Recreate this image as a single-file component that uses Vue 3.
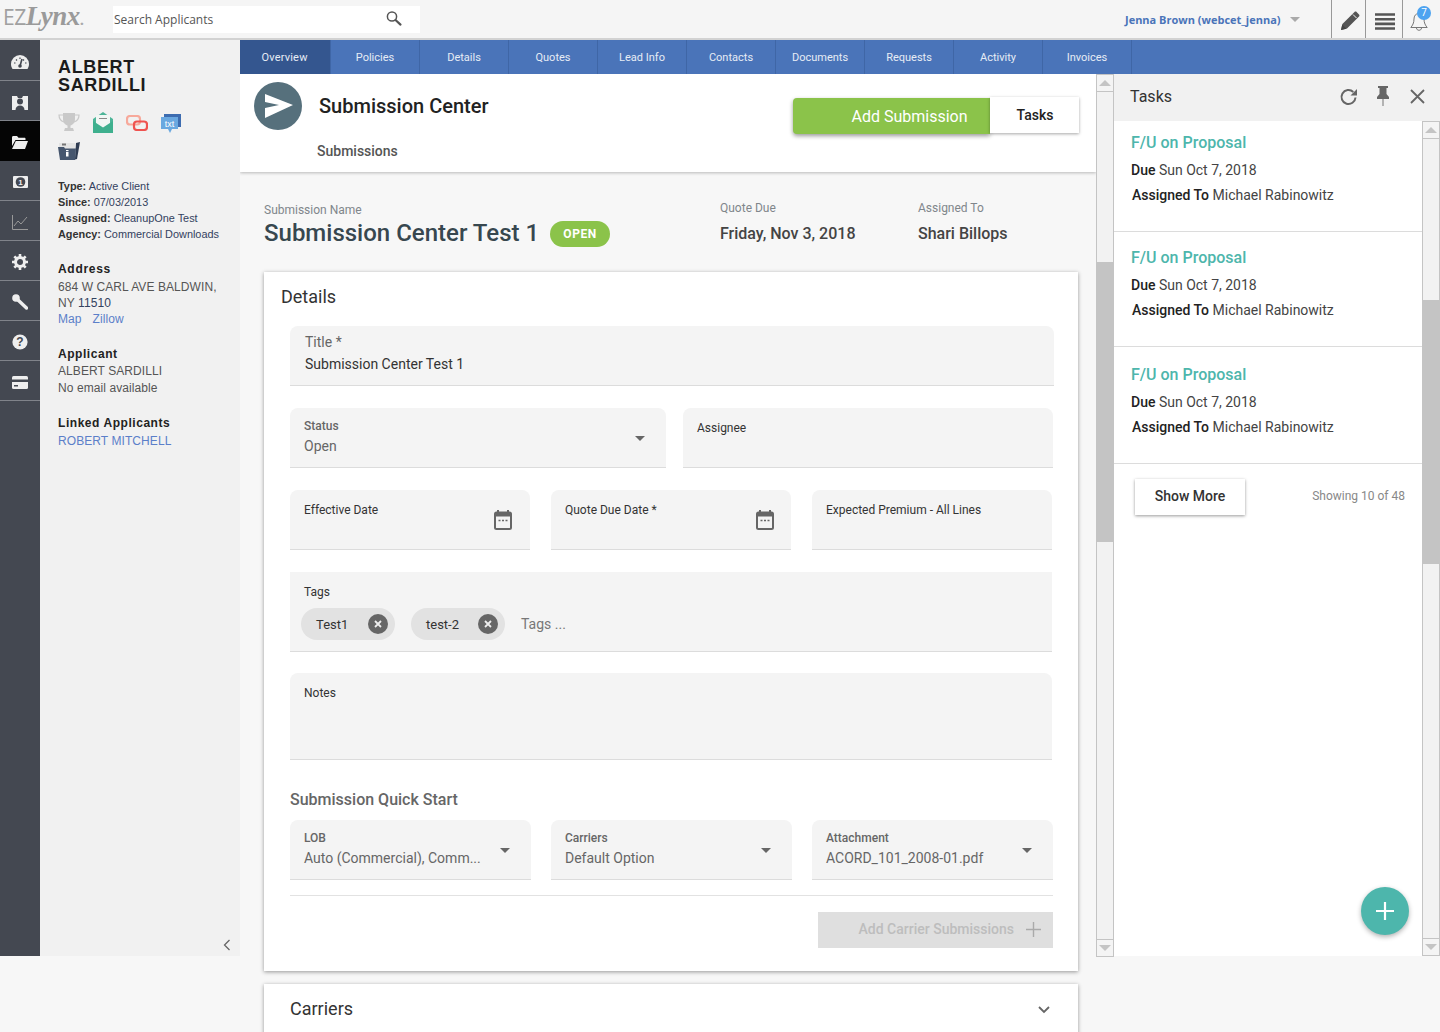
<script setup>
const navItems = ['Overview','Policies','Details','Quotes','Lead Info','Contacts','Documents','Requests','Activity','Invoices']
const tasks = [
  { cls: 't1' }, { cls: 't2' }, { cls: 't3' }
]
const dropdowns = [
  { label: 'LOB', value: 'Auto (Commercial), Comm...', cls: 'w241' },
  { label: 'Carriers', value: 'Default Option', cls: 'w241' },
  { label: 'Attachment', value: 'ACORD_101_2008-01.pdf', cls: 'w241' }
]
</script>

<template>
  <div class="app">
    <header class="top">
      <div class="logo"><span class="ez">EZ</span><span class="lynx">Lynx</span><span class="dot">.</span></div>
      <div class="search">
        <span>Search Applicants</span>
        <svg width="18" height="18" viewBox="0 0 18 18" class="search-ico"><circle cx="7" cy="6.5" r="4.6" fill="none" stroke="#555" stroke-width="1.5"/><path d="M10.5 10l5 4.6" stroke="#555" stroke-width="2.2" stroke-linecap="round"/></svg>
      </div>
      <div class="user">Jenna Brown (webcet_jenna)<i class="user-caret"></i></div>
      <div class="tool t-pen">
        <svg width="22" height="22" viewBox="0 0 22 22"><path d="M2 20l1.400-6L15.500 2c.6-.6 1.500-.6 2.100 0l2.400 2.400c.6.6.6 1.500 0 2.100L8 18.600z" fill="#555"/><path d="M2 20l1.300-5.500 4.200 4.200z" fill="#444"/><path d="M14 4.500l3.500 3.500" stroke="#f5f5f5" stroke-width="1"/></svg>
      </div>
      <div class="tool t-menu">
        <svg width="20" height="17" viewBox="0 0 20 17"><path d="M0 1.500h20M0 6.200h20M0 10.900h20M0 15.500h20" stroke="#555" stroke-width="2.600"/></svg>
      </div>
      <div class="tool t-bell">
        <svg width="18" height="20" viewBox="0 0 18 20"><path d="M9 1.500c-3.500 0-5 2.500-5 5.500 0 4-1.500 6.500-3.200 8.500h16.400C15.500 13.500 14 11 14 7c0-3-1.500-5.500-5-5.500zM6.500 16c0 3 5 3 5 0" fill="none" stroke="#777" stroke-width="1"/></svg>
        <span class="badge">7</span>
      </div>
    </header>

    <div class="body">
      <div class="leftwrap">
        <nav class="rail">
          <div class="rail-i">
            <svg width="18" height="14" viewBox="0 0 18 14"><path d="M9 0a9 9 0 0 0-9 9c0 2 .6 3.500 1.500 5h15c.9-1.500 1.500-3 1.500-5a9 9 0 0 0-9-9z" fill="#eee"/><path d="M9 11l2-7" stroke="#444851" stroke-width="1.600"/><circle cx="9" cy="11" r="1.800" fill="#444851"/><path d="M3 8h1.500M5 4.500l1 1M9 2.500v1.500M14 8h1.500M13 4.500l-1 1" stroke="#444851" stroke-width="1.200"/></svg>
          </div>
          <div class="rail-i">
            <svg width="16" height="15" viewBox="0 0 16 15"><path d="M0 1h5l1 2h4l1-2h5v14H0z" fill="#eee"/><circle cx="8" cy="6.500" r="3" fill="#444851"/><path d="M3.500 15c0-3 2-4.500 4.500-4.500s4.500 1.500 4.500 4.500z" fill="#444851"/></svg>
          </div>
          <div class="rail-i active">
            <svg width="16" height="13" viewBox="0 0 16 13"><path d="M0 1.500C0 .7.500 0 1.300 0H5l1.500 1.700h6c.6 0 1 .4 1 1V4H3.500L0 10z" fill="#eee"/><path d="M3.800 5H16l-3 8H0z" fill="#eee"/></svg>
          </div>
          <div class="rail-i">
            <svg width="15" height="12" viewBox="0 0 15 12"><rect width="15" height="12" rx="1" fill="#eee"/><circle cx="7.500" cy="6" r="4.800" fill="#444851"/><text x="7.500" y="9" text-anchor="middle" class="money">1</text></svg>
          </div>
          <div class="rail-i">
            <svg width="16" height="15" viewBox="0 0 16 15"><path d="M.5 0v14.500H16" fill="none" stroke="#999" stroke-width="1"/><path d="M2 11l4-5 3 3 6-7" fill="none" stroke="#999" stroke-width="1"/></svg>
          </div>
          <div class="rail-i">
            <svg width="16" height="16" viewBox="0 0 16 16"><circle cx="8" cy="8" r="4.500" fill="none" stroke="#eee" stroke-width="3"/><path d="M8 0v3M8 13v3M0 8h3M13 8h3M2.300 2.300l2.200 2.200M11.500 11.500l2.200 2.200M2.300 13.700l2.200-2.200M11.500 4.500l2.200-2.200" stroke="#eee" stroke-width="2.600"/></svg>
          </div>
          <div class="rail-i">
            <svg width="16" height="16" viewBox="0 0 16 16"><circle cx="4" cy="4" r="3.800" fill="#eee"/><path d="M6 6l8.500 8" stroke="#eee" stroke-width="3.400" stroke-linecap="round"/></svg>
          </div>
          <div class="rail-i">
            <svg width="16" height="16" viewBox="0 0 16 16"><circle cx="8" cy="8" r="7.600" fill="#eee"/><text x="8" y="12" text-anchor="middle" class="qmark">?</text></svg>
          </div>
          <div class="rail-i">
            <svg width="16" height="13" viewBox="0 0 16 13"><rect width="16" height="13" rx="1.500" fill="#eee"/><rect y="3.500" width="16" height="2.500" fill="#444851"/><rect x="2" y="9" width="4" height="1.500" fill="#444851"/></svg>
          </div>
        </nav>
        <aside class="side">
          <h1 class="name">ALBERT<br>SARDILLI</h1>
          <div class="side-icons">
            <svg width="22" height="21" viewBox="0 0 22 21"><path d="M5 1h12v6c0 4-2.500 6-4.500 6.500V16H15l1 3H6l1-3h2.500v-2.500C7.500 13 5 11 5 7z" fill="#c9c9c9"/><path d="M5 3H1c0 4 2 6 5 7M17 3h4c0 4-2 6-5 7" fill="none" stroke="#c9c9c9" stroke-width="1.200"/></svg>
            <svg width="20" height="21" viewBox="0 0 20 21"><path d="M0 7l10-7 10 7v14H0z" fill="#4db598"/><path d="M3 3h14v10l-7 4-7-4z" fill="#f1f7f4"/><path d="M6 6.500h8" stroke="#888" stroke-width="1"/><path d="M0 9l10 6.500L20 9v12H0z" fill="#3fb08e"/></svg>
            <svg class="chain" width="22" height="16" viewBox="0 0 22 16"><rect x="1" y="1" width="13" height="8.500" rx="3" fill="none" stroke="#f7a99b" stroke-width="2.200"/><rect x="8" y="6.500" width="13" height="8.500" rx="3" fill="none" stroke="#ef5350" stroke-width="2.200"/></svg>
            <svg class="txtico" width="20" height="20" viewBox="0 0 20 20"><rect x="3" width="17" height="13" fill="#3d6cb0"/><path d="M0 3h17v12H11l-2 4-2-4H0z" fill="#6aa8e0"/><text x="8.500" y="12.500" text-anchor="middle" class="txt">txt</text></svg>
          </div>
          <div class="side-folder">
            <svg width="22" height="18" viewBox="0 0 22 18"><path d="M18 1l4-1-3 17-2 .5z" fill="#2f3c52"/><rect x="1" y="1" width="16" height="6" fill="#e4e4e4"/><rect x="4" y="1.500" width="4" height="2" fill="#777"/><path d="M0 5h6l1 1.500h11L17 18H2z" fill="#46566e"/><rect x="8" y="10" width="2.500" height="4.500" fill="#fff"/><rect x="8" y="8" width="2.500" height="1.200" fill="#fff"/></svg>
          </div>
          <div class="meta">
            <div><b>Type:</b> Active Client</div>
            <div><b>Since:</b> 07/03/2013</div>
            <div><b>Assigned:</b> CleanupOne Test</div>
            <div><b>Agency:</b> Commercial Downloads</div>
          </div>
          <h3 class="sec s-addr">Address</h3>
          <div class="line">684 W CARL AVE BALDWIN,</div>
          <div class="line">NY <span class="dark">11510</span></div>
          <div class="line link"><span class="map">Map</span>Zillow</div>
          <h3 class="sec s-app">Applicant</h3>
          <div class="line l17">ALBERT SARDILLI</div>
          <div class="line l17">No email available</div>
          <h3 class="sec s-link">Linked Applicants</h3>
          <div class="line link">ROBERT MITCHELL</div>
          <svg class="collapse" width="8" height="12" viewBox="0 0 8 12"><path d="M6.500 1L1.500 6l5 5" fill="none" stroke="#666" stroke-width="1.300"/></svg>
        </aside>
      </div>

      <div class="mainwrap">
        <div class="tabs">
          <a v-for="(n, i) in navItems" :key="n" class="tab" :class="{ on: i === 0 }">{{ n }}</a>
        </div>
        <div class="columns">
          <main class="center">
            <section class="head">
              <div class="head-l">
                <div class="circle">
                  <svg width="28" height="24" viewBox="0 0 28 24"><path d="M0 0l28 11-28 13V14l14-3L0 8z" fill="#fff"/></svg>
                </div>
                <h2>Submission Center</h2>
              </div>
              <div class="head-btns">
                <button class="add">Add Submission</button>
                <button class="tasksbtn">Tasks</button>
              </div>
              <div class="subtab">Submissions</div>
            </section>

            <section class="summary">
              <div class="s-main">
                <div class="s-lbl">Submission Name</div>
                <div class="s-title">Submission Center Test 1<span class="pill">OPEN</span></div>
              </div>
              <div class="s-col c1">
                <div class="s-lbl">Quote Due</div>
                <div class="s-val">Friday, Nov 3, 2018</div>
              </div>
              <div class="s-col">
                <div class="s-lbl">Assigned To</div>
                <div class="s-val">Shari Billops</div>
              </div>
            </section>

            <section class="card details">
              <h3 class="card-h">Details</h3>
              <div class="fld title-f">
                <div class="lab-lg">Title *</div>
                <div class="val-dark">Submission Center Test 1</div>
              </div>
              <div class="row r-two">
                <div class="fld f-status">
                  <div class="lab">Status</div>
                  <div class="val">Open</div>
                  <i class="caret"></i>
                </div>
                <div class="fld f-assign"><div class="lab plain">Assignee</div></div>
              </div>
              <div class="row r-three">
                <div class="fld f-date"><div class="lab plain">Effective Date</div>
                  <svg class="cal" width="18" height="20" viewBox="0 0 18 20"><path d="M4 0v3M14 0v3" stroke="#666" stroke-width="2"/><rect x="1" y="2.500" width="16" height="16.500" rx="1.500" fill="none" stroke="#666" stroke-width="2"/><rect x="1" y="2.500" width="16" height="4" fill="#666"/><path d="M4.500 10.500h2M8 10.500h2M11.500 10.500h2" stroke="#666" stroke-width="1.600"/></svg>
                </div>
                <div class="fld f-date"><div class="lab plain">Quote Due Date *</div>
                  <svg class="cal" width="18" height="20" viewBox="0 0 18 20"><path d="M4 0v3M14 0v3" stroke="#666" stroke-width="2"/><rect x="1" y="2.500" width="16" height="16.500" rx="1.500" fill="none" stroke="#666" stroke-width="2"/><rect x="1" y="2.500" width="16" height="4" fill="#666"/><path d="M4.500 10.500h2M8 10.500h2M11.500 10.500h2" stroke="#666" stroke-width="1.600"/></svg>
                </div>
                <div class="fld f-date"><div class="lab plain">Expected Premium - All Lines</div></div>
              </div>
              <div class="fld f-tags">
                <div class="lab plain">Tags</div>
                <div class="chips">
                  <span class="chip">Test1<i class="x"><svg width="8" height="8" viewBox="0 0 8 8"><path d="M1 1l6 6M7 1L1 7" stroke="#eee" stroke-width="1.800"/></svg></i></span>
                  <span class="chip c2">test-2<i class="x"><svg width="8" height="8" viewBox="0 0 8 8"><path d="M1 1l6 6M7 1L1 7" stroke="#eee" stroke-width="1.800"/></svg></i></span>
                  <span class="tagph">Tags ...</span>
                </div>
              </div>
              <div class="fld f-notes"><div class="lab plain">Notes</div></div>
              <h4 class="qs">Submission Quick Start</h4>
              <div class="row r-dd">
                <div v-for="d in dropdowns" :key="d.label" class="fld f-dd">
                  <div class="lab">{{ d.label }}</div>
                  <div class="val">{{ d.value }}</div>
                  <i class="caret"></i>
                </div>
              </div>
              <div class="rule"></div>
              <div class="act">
                <div class="disabled">Add Carrier Submissions
                  <svg width="15" height="15" viewBox="0 0 15 15"><path d="M7.500 0v15M0 7.500h15" stroke="#aaa" stroke-width="1.400"/></svg>
                </div>
              </div>
            </section>

            <section class="card carriers">
              <span>Carriers</span>
              <svg width="12" height="8" viewBox="0 0 12 8"><path d="M1 1l5 5 5-5" fill="none" stroke="#666" stroke-width="1.800"/></svg>
            </section>
          </main>

          <div class="sb sb-outer">
            <div class="sb-btn"><i class="up"></i></div>
            <div class="sb-track"><div class="thumb"></div></div>
            <div class="sb-btn"><i class="down"></i></div>
          </div>

          <aside class="panel">
            <div class="panel-h">
              <span>Tasks</span>
              <svg class="ph1" width="20" height="20" viewBox="0 0 20 20"><path d="M16.500 10.500a7 7 0 1 1-2.200-5.600" fill="none" stroke="#666" stroke-width="2"/><path d="M18 2v6.500h-6.500z" fill="#666"/></svg>
              <svg class="ph2" width="14" height="20" viewBox="0 0 14 20"><path d="M2 0h10v2h-1.500v6L13 11v2H1v-2l2.500-3V2H2z" fill="#666"/><path d="M7 13v7" stroke="#999" stroke-width="1.400"/></svg>
              <svg class="ph3" width="15" height="15" viewBox="0 0 15 15"><path d="M1 1l13 13M14 1L1 14" stroke="#666" stroke-width="1.800"/></svg>
            </div>
            <div class="panel-b">
              <div class="list">
                <div v-for="t in tasks" :key="t.cls" class="task" :class="t.cls">
                  <a class="t-title">F/U on Proposal</a>
                  <div class="t-line first"><b>Due</b> Sun Oct 7, 2018</div>
                  <div class="t-line ind"><b>Assigned To</b> Michael Rabinowitz</div>
                </div>
                <div class="more">
                  <button class="showmore">Show More</button>
                  <span class="showing">Showing 10 of 48</span>
                </div>
                <button class="fab">
                  <svg width="20" height="20" viewBox="0 0 20 20"><path d="M10 1v18M1 10h18" stroke="#fff" stroke-width="2.200"/></svg>
                </button>
              </div>
              <div class="sb sb-inner">
                <div class="sb-btn"><i class="up"></i></div>
                <div class="sb-track"><div class="thumb"></div></div>
                <div class="sb-btn"><i class="down"></i></div>
              </div>
            </div>
          </aside>
        </div>
      </div>
    </div>
  </div>
</template>

<style>
html, body { margin: 0; background: #f7f7f7; }
</style>

<style scoped>
* { box-sizing: border-box; }
.app { width: 1440px; height: 1032px; overflow: hidden; background: #f7f7f7; font-family: Roboto, sans-serif; color: #333; }

.top { height: 40px; display: flex; align-items: stretch; background: #f5f5f5; border-bottom: 2px solid #d2d2d2; }
.logo { width: 113px; padding-left: 3px; line-height: 40px; color: #999; white-space: nowrap; }
.ez { font: 21px "Open Sans", sans-serif; letter-spacing: -.5px; color: #a0a0a0; }
.lynx { font: italic 700 27px "Liberation Serif", serif; color: #9a9a9a; letter-spacing: -.5px; }
.dot { font: 700 15px "Open Sans", sans-serif; color: #aaa; }
.search { width: 307px; height: 27px; margin-top: 6px; background: #fff; padding-left: 1px; display: flex; align-items: center; justify-content: space-between; font: 12px "Open Sans", sans-serif; color: #555; }
.search-ico { margin-right: 17px; margin-top: -2px; }
.user { margin-left: 705px; width: 206px; font: 700 11px "Open Sans", sans-serif; color: #4a74b9; line-height: 40px; white-space: nowrap; }
.user-caret { display: inline-block; margin-left: 9px; vertical-align: 2px; border: 5px solid transparent; border-top-color: #aaa; border-bottom: 0; }
.tool { border-left: 1px solid #999; display: flex; align-items: center; justify-content: center; position: relative; height: 38px; }
.t-pen { width: 34px; padding-left: 3px; padding-top: 3px; }
.t-menu { width: 37px; padding-left: 2px; padding-top: 4px; }
.t-bell { width: 38px; padding-right: 6px; padding-top: 5px; }
.badge { position: absolute; left: 14px; top: 6px; width: 14px; height: 14px; border-radius: 50%; background: #4da3f0; color: #fff; font: 10px/14px Roboto, sans-serif; text-align: center; }

.body { display: flex; height: 992px; }
.leftwrap { display: flex; width: 240px; height: 916px; }
.rail { width: 40px; background: #444851; padding-top: 1px; }
.rail-i { height: 40px; display: flex; align-items: center; justify-content: center; border-bottom: 1px solid #80838a; padding-top: 3px; }
.rail-i.active { background: #050505; border-bottom-color: #050505; }
.money { font: 700 8px "Liberation Sans", sans-serif; fill: #eee; }
.qmark { font: 700 12px "Liberation Sans", sans-serif; fill: #444851; }

.side { width: 200px; position: relative; background: #f1f1f1; padding: 18px 0 0 18px; font: 12px/16px "Liberation Sans", Arial, sans-serif; color: #555; }
.name { margin: 0; font: 700 18px/18px "Liberation Sans", Arial, sans-serif; letter-spacing: .65px; color: #1b1b1b; }
.side-icons { display: flex; align-items: flex-start; gap: 13px; margin-top: 18px; height: 24px; }
.chain { margin-top: 3px; }
.txtico { margin-top: 2px; }
.side-folder { margin-top: 6px; height: 22px; }
.txt { font: 9px "Liberation Sans", sans-serif; fill: #fff; }
.meta { margin-top: 14px; font-size: 10.900px; line-height: 16px; color: #33415e; }
.meta b { color: #333; }
.sec { margin: 0; font: 700 12px/16px "Liberation Sans", Arial, sans-serif; letter-spacing: .55px; color: #222; }
.s-addr { margin-top: 19px; margin-bottom: 2px; letter-spacing: .7px; }
.s-app { margin-top: 19px; }
.s-link { margin-top: 18px; margin-bottom: 2px; }
.line { white-space: nowrap; letter-spacing: .08px; }
.l17 { line-height: 17px; }
.s-app + .l17 { padding-top: 1px; line-height: 17px; }
.dark { color: #33415e; }
.link { color: #5b7fc9; }
.map { margin-right: 11px; }
.collapse { position: absolute; left: 183px; top: 899px; }

.mainwrap { width: 1200px; display: flex; flex-direction: column; }
.tabs { height: 34px; background: #4a74b9; display: flex; }
.tab { width: 89px; font-size: 11px; line-height: 35px; color: #e6ecf5; text-align: center; border-right: 1px solid #3f66a6; }
.tab.on { width: 91px; padding-right: 1px; letter-spacing: .2px; background: #34568f; }
.columns { display: flex; height: 958px; align-items: flex-start; }

.center { width: 856px; height: 958px; overflow: hidden; }
.head { height: 98px; background: #fff; box-shadow: 0 1px 3px rgba(0,0,0,.25); display: grid; grid-template-columns: 1fr auto; grid-template-rows: 64px 34px; position: relative; }
.head-l { display: flex; align-items: flex-start; padding: 8px 0 0 14px; }
.circle { width: 48px; height: 48px; border-radius: 50%; background: #56707c; display: flex; align-items: center; justify-content: center; padding-left: 2px; }
.head-l h2 { margin: 12px 0 0 17px; font-size: 20px; line-height: 24px; font-weight: 500; color: #222; }
.head-btns { display: flex; align-items: flex-start; padding: 24px 17px 0 0; }
.add { width: 197px; height: 36px; border: 0; border-radius: 4px 0 0 4px; background: #8bc34a; color: #fff; font: 400 16px Roboto, sans-serif; padding: 0 0 0 36px; box-shadow: 0 2px 4px rgba(0,0,0,.4); }
.tasksbtn { width: 89px; height: 36px; margin-top: -1px; border: 0; background: #fff; color: #222; font: 500 14px Roboto, sans-serif; box-shadow: 0 1px 3px rgba(0,0,0,.35); position: relative; padding: 0 0 0 1px; }
.subtab { grid-column: 1 / 3; padding: 5px 0 0 77px; font-size: 14px; line-height: 16px; font-weight: 500; color: #555; }

.summary { display: flex; align-items: flex-start; padding: 29px 0 0 24px; height: 100px; }
.s-main { width: 456px; flex: none; padding-top: 2px; }
.s-lbl { font-size: 12px; line-height: 14px; color: #80868b; }
.s-title { display: flex; align-items: center; margin-top: 1px; font-size: 24px; line-height: 30px; font-weight: 500; color: #37474f; white-space: nowrap; }
.pill { margin: 2px 0 0 11px; width: 60px; height: 26px; border-radius: 13px; background: #8bc34a; color: #fff; font-size: 12px; line-height: 26px; font-weight: 700; text-align: center; letter-spacing: .6px; }
.s-col { width: 198px; flex: none; }
.s-col:last-child { width: 158px; }
.s-val { margin-top: 9px; font-size: 16px; line-height: 20px; font-weight: 500; color: #444; white-space: nowrap; }

.card { width: 814px; margin-left: 24px; background: #fff; box-shadow: 0 1px 4px rgba(0,0,0,.4); }
.details { height: 699px; padding: 15px 24px 0 26px; }
.card-h { margin: 0 0 19px -9px; font-size: 18px; line-height: 20px; font-weight: 400; color: #333; }
.fld { position: relative; background: #f4f4f4; border-bottom: 1px solid #dcdcdc; border-radius: 8px 8px 0 0; padding: 11px 14px 0; }
.title-f { height: 60px; width: 764px; padding: 8px 15px 0; }
.lab-lg { font-size: 14px; line-height: 16px; color: #666; }
.val-dark { margin-top: 6px; font-size: 14px; line-height: 16px; color: #333; }
.row { display: flex; }
.r-two { margin-top: 22px; gap: 17px; }
.f-status { width: 376px; height: 60px; }
.f-assign { width: 370px; height: 60px; padding-top: 13px; }
.lab { font-size: 12px; line-height: 14px; font-weight: 500; color: #666; }
.lab.plain { font-weight: 400; color: #333; }
.val { margin-top: 5px; font-size: 14px; line-height: 16px; color: #666; white-space: nowrap; }
.caret { position: absolute; right: 21px; top: 28px; border: 5px solid transparent; border-top-color: #666; border-bottom: 0; }
.r-three { margin-top: 22px; gap: 21px; }
.f-date { width: 240px; height: 60px; padding-top: 13px; }
.cal { position: absolute; right: 18px; top: 20px; }
.f-date + .f-date .cal { right: 17px; }
.f-tags { margin-top: 22px; width: 762px; height: 80px; padding-top: 13px; border-radius: 0; }
.chips { display: flex; align-items: center; margin: 9px 0 0 -3px; }
.chip { width: 94px; height: 32px; border-radius: 16px; background: #e2e2e2; display: flex; align-items: center; justify-content: space-between; padding: 0 7px 0 15px; font-size: 13px; color: #333; }
.chip.c2 { margin-left: 16px; }
.x { width: 20px; height: 20px; border-radius: 50%; background: #666; display: flex; align-items: center; justify-content: center; }
.tagph { margin-left: 16px; font-size: 14px; color: #777; }
.f-notes { margin-top: 21px; width: 762px; height: 87px; padding-top: 13px; }
.qs { margin: 31px 0 11px; font-size: 16px; line-height: 18px; font-weight: 500; color: #666; }
.r-dd { gap: 20px; }
.f-dd { width: 241px; height: 60px; }
.rule { margin-top: 15px; width: 763px; border-top: 1px solid #e2e2e2; }
.act { margin-top: 16px; width: 763px; display: flex; justify-content: flex-end; }
.disabled { width: 235px; height: 36px; background: #dfdfdf; color: #bdbdbd; font-size: 14px; font-weight: 500; display: flex; align-items: center; justify-content: flex-end; gap: 12px; padding: 0 12px 2px 0; }
.carriers { margin-top: 13px; height: 80px; padding: 14px 28px 0 26px; display: flex; align-items: flex-start; justify-content: space-between; font-size: 18px; line-height: 22px; color: #333; }
.carriers svg { margin-top: 8px; }

.sb { display: flex; flex-direction: column; border: 1px solid #c4c4c4; background: #f4f4f4; }
.sb-outer { width: 18px; height: 883px; flex: none; border-top: 1px solid #c4c4c4; }
.sb-inner { width: 18px; height: 835px; flex: none; }
.sb-btn { height: 17px; flex: none; display: flex; align-items: center; justify-content: center; border-bottom: 1px solid #c4c4c4; background: #f4f4f4; }
.sb-btn:last-child { border-bottom: 0; border-top: 1px solid #c4c4c4; }
.sb-track { flex: 1; background: #f2f2f2; }
.thumb { background: #c4c4c4; width: 100%; }
.sb-outer .thumb { height: 280px; margin-top: 170px; }
.sb-inner .thumb { height: 264px; margin-top: 161px; }
.up { border: 6px solid transparent; border-bottom-color: #c4c4c4; border-top: 0; }
.down { border: 6px solid transparent; border-top-color: #c4c4c4; border-bottom: 0; }

.panel { width: 326px; height: 882px; }
.panel-h { height: 47px; background: #f1f1f1; display: flex; align-items: center; padding: 0 14px 2px 16px; font-size: 16px; color: #333; }
.panel-h span { flex: 1; }
.ph2 { margin: -2px 0 0 17px; }
.ph1 { margin-top: 0; }
.ph3 { margin: 0 1px 0 20px; }
.panel-b { display: flex; background: #fff; height: 835px; }
.list { width: 308px; position: relative; }
.task { border-bottom: 1px solid #dcdcdc; padding: 12px 0 0 17px; }
.t1 { height: 111px; }
.t2 { height: 115px; padding-top: 16px; }
.t3 { height: 117px; padding-top: 18px; }
.t-title { display: block; font-size: 16px; line-height: 20px; font-weight: 500; color: #4db6ac; }
.t-line { margin-top: 8px; font-size: 14px; line-height: 17px; color: #444; }
.t-line.first { margin-top: 9px; }
.t-line b { font-weight: 500; color: #222; }
.ind { padding-left: 1px; }
.more { display: flex; justify-content: space-between; align-items: center; padding: 15px 17px 0 21px; }
.showmore { width: 110px; height: 36px; border: 0; background: #fff; box-shadow: 0 1px 3px rgba(0,0,0,.4); font: 500 14px Roboto, sans-serif; color: #333; padding: 0 0 2px; }
.showing { font-size: 12px; color: #888; margin-top: -2px; }
.fab { position: absolute; left: 247px; top: 766px; width: 48px; height: 48px; border-radius: 50%; border: 0; background: #4db6ac; box-shadow: 0 2px 5px rgba(0,0,0,.3); display: flex; align-items: center; justify-content: center; padding: 0; }
</style>
